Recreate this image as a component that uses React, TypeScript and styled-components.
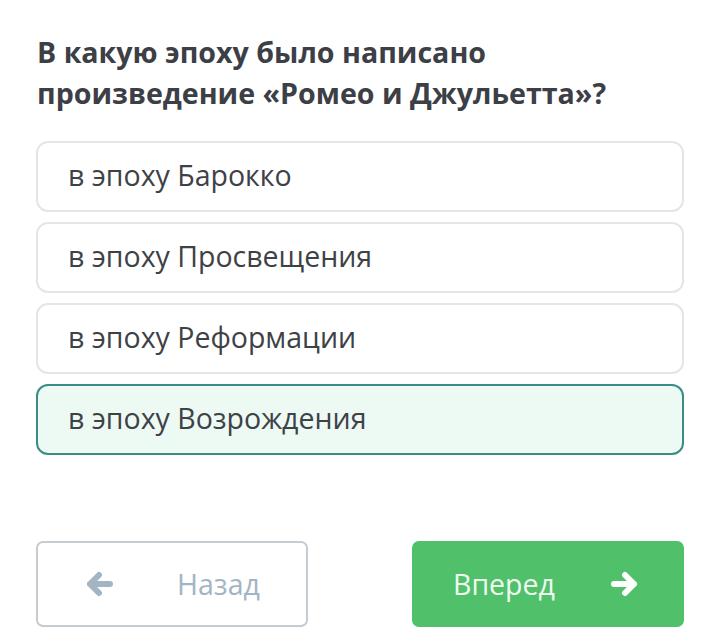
import React from "react";
import styled, { createGlobalStyle } from "styled-components";

const GlobalStyle = createGlobalStyle`
  html, body {
    margin: 0;
    padding: 0;
    background: #ffffff;
  }
  body {
    font-family: "Open Sans", "Noto Sans", sans-serif;
  }
`;

const answers = [
  "в эпоху Барокко",
  "в эпоху Просвещения",
  "в эпоху Реформации",
  "в эпоху Возрождения",
];

const ArrowIcon = ({ left, color }: { left?: boolean; color: string }) => (
  <svg
    width="30"
    height="26"
    viewBox="0 0 30 26"
    style={{ transform: left ? "scaleX(-1)" : undefined }}
  >
    <path
      d="M4 13 H24 M15 4 L24 13 L15 22"
      fill="none"
      stroke={color}
      strokeWidth="6"
      strokeLinecap="round"
      strokeLinejoin="round"
    />
  </svg>
);

const App = () => {
  const selected = 3;
  return (
    <Page>
      <GlobalStyle />
      <Question>
        В какую эпоху было написано
        <br />
        произведение «Ромео и Джульетта»?
      </Question>
      <Options>
        {answers.map((a, i) => (
          <Option key={a} $active={i === selected}>
            {a}
          </Option>
        ))}
      </Options>
      <Footer>
        <BackButton>
          <ArrowIcon left color="#a3b5c2" />
          <span>Назад</span>
        </BackButton>
        <NextButton>
          <span>Вперед</span>
          <ArrowIcon color="#ffffff" />
        </NextButton>
      </Footer>
    </Page>
  );
};

export default App;

const Page = styled.div`
  width: 720px;
  height: 641px;
  box-sizing: border-box;
  padding: 31px 36px 0 36px;
  display: flex;
  flex-direction: column;
`;

const Question = styled.h1`
  margin: 0 0 0 1px;
  font-size: 28.6px;
  line-height: 41px;
  font-weight: 700;
  color: #3c4046;
`;

const Options = styled.div`
  margin-top: 28px;
  display: flex;
  flex-direction: column;
  gap: 10px;
`;

const Option = styled.div<{ $active?: boolean }>`
  height: 71px;
  box-sizing: border-box;
  display: flex;
  align-items: center;
  padding: 0 0 3px 30px;
  border-radius: 12px;
  border: 2px solid ${(p) => (p.$active ? "#3b8c84" : "#e3e5e6")};
  background: ${(p) => (p.$active ? "#edf9f3" : "#ffffff")};
  font-size: 28.5px;
  color: #3e4246;
`;

const Footer = styled.div`
  margin-top: 86px;
  display: flex;
  justify-content: space-between;
`;

const ButtonBase = styled.div`
  width: 272px;
  height: 86px;
  box-sizing: border-box;
  border-radius: 7px;
  display: flex;
  align-items: center;
  font-size: 28.5px;
`;

const BackButton = styled(ButtonBase)`
  border: 2px solid #c4ccd1;
  color: #a3b5c2;
  padding-left: 46px;
  gap: 63px;
`;

const NextButton = styled(ButtonBase)`
  background: #50c16a;
  color: #eef9f0;
  padding-left: 41px;
  gap: 55px;
`;
